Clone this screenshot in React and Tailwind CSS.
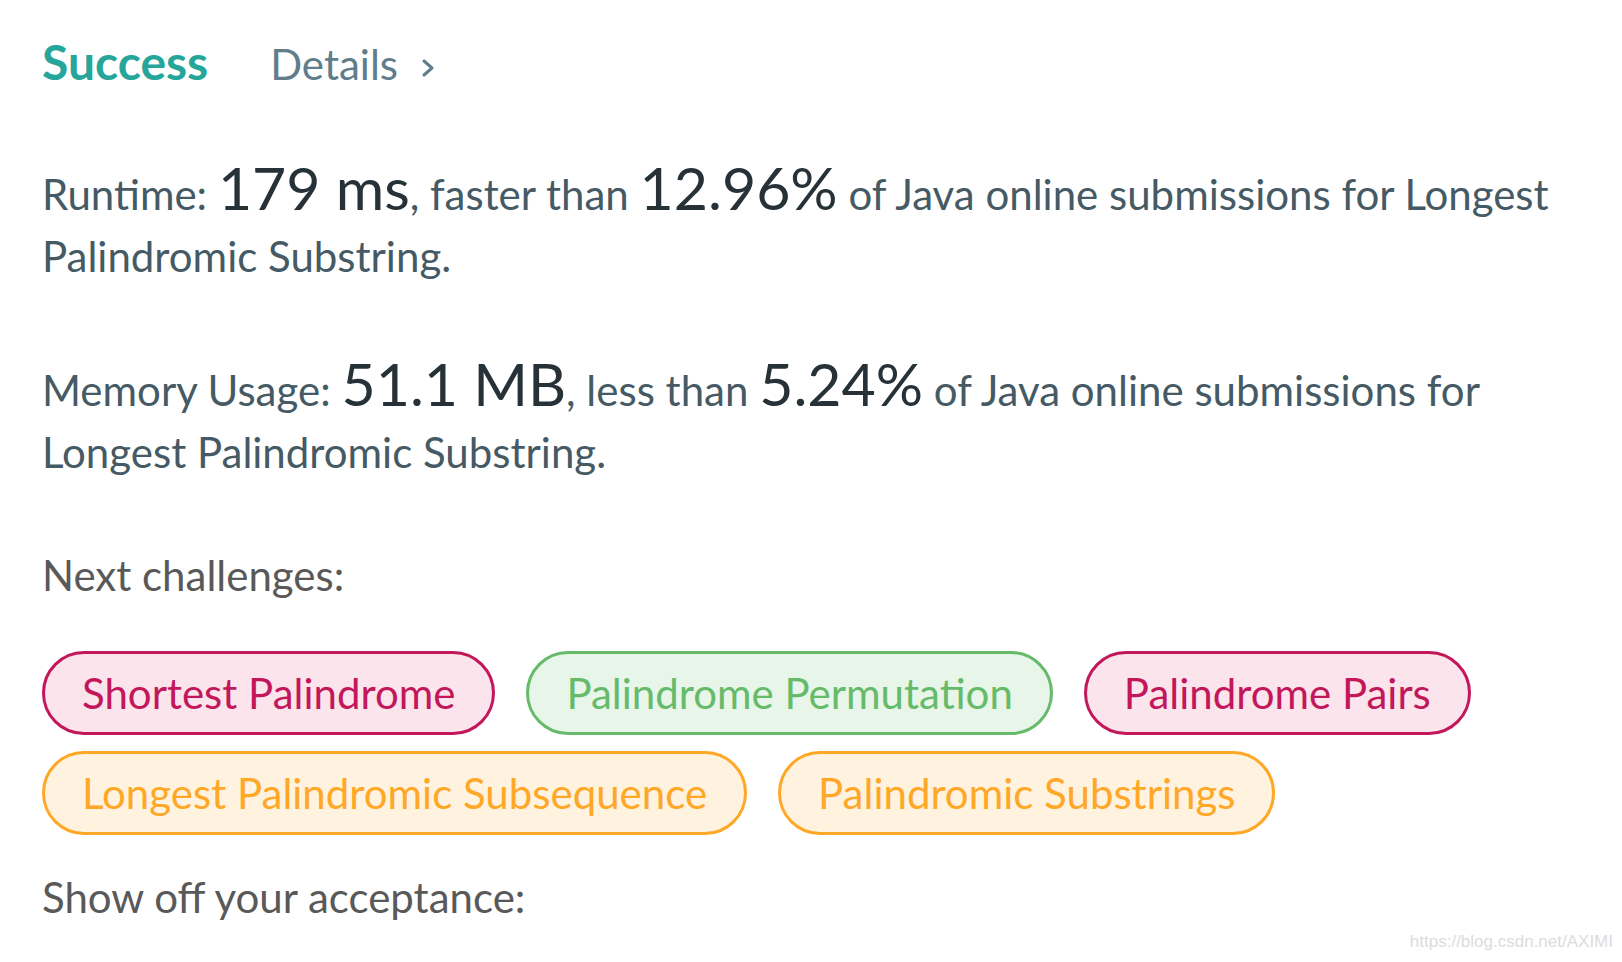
import React from 'react';

const challenges = [
  { name: 'Shortest Palindrome', level: 'hard' },
  { name: 'Palindrome Permutation', level: 'easy' },
  { name: 'Palindrome Pairs', level: 'hard' },
  { name: 'Longest Palindromic Subsequence', level: 'medium' },
  { name: 'Palindromic Substrings', level: 'medium' },
];

const pillStyles = {
  easy: 'border-[#66bb6a] bg-[#e8f5e9] text-[#66bb6a]',
  medium: 'border-[#ffa726] bg-[#fff3e0] text-[#ffa726]',
  hard: 'border-[#c2185b] bg-[#fce4ec] text-[#c2185b]',
};

const Stat = ({ label, value, compare, percent, children }) => (
  <p className="text-[42px] leading-[62px] text-[#455a64]">
    {label}: <span className="text-[59px] text-[#263238]">{value}</span>, {compare} than{' '}
    <span className="text-[59px] text-[#263238]">{percent}</span> {children}
  </p>
);

export default function App() {
  return (
    <div
      className="relative h-[962px] w-full overflow-hidden bg-white px-[42px] pt-[26px]"
      style={{ fontFamily: 'Lato, "Noto Sans", sans-serif' }}
    >
      {/* Header */}
      <div className="flex items-baseline">
        <span className="text-[48px] font-bold leading-[72px] text-[#26a69a]">Success</span>
        <a className="ml-[62px] flex items-center text-[42px] leading-[72px] text-[#607d8b]" href="#">
          Details
          <svg className="ml-[22px] mt-[8px] h-[22px] w-[16px]" viewBox="0 0 16 22" fill="none">
            <polyline points="4,4 12,11 4,18" stroke="#607d8b" strokeWidth="3" strokeLinecap="round" strokeLinejoin="round" />
          </svg>
        </a>
      </div>

      {/* Stats */}
      <div className="mt-[57px]">
        <Stat label="Runtime" value="179 ms" compare="faster" percent="12.96%">
          of Java online submissions for Longest Palindromic Substring.
        </Stat>
        <div className="mt-[66px]">
          <Stat label="Memory Usage" value="51.1 MB" compare="less" percent="5.24%">
            of Java online submissions for Longest Palindromic Substring.
          </Stat>
        </div>
      </div>

      {/* Next challenges */}
      <div className="mt-[61px] text-[42px] leading-[62px] text-[#595959]">Next challenges:</div>
      <div className="mt-[45px] flex flex-wrap gap-x-[31px] gap-y-[16px]">
        {challenges.map((c) => (
          <a
            key={c.name}
            href="#"
            className={`rounded-full border-[3px] px-[37px] py-[9px] text-[42px] leading-[60px] ${pillStyles[c.level]}`}
          >
            {c.name}
          </a>
        ))}
      </div>

      <div className="mt-[31px] text-[42px] leading-[62px] text-[#595959]">Show off your acceptance:</div>

      {/* Watermark */}
      <span
        className="absolute bottom-[8px] right-[9px] text-[17px] text-[#dcdcdc]"
        style={{ fontFamily: '"Liberation Sans", Arial, sans-serif' }}
      >
        https://blog.csdn.net/AXIMI
      </span>
    </div>
  );
}
